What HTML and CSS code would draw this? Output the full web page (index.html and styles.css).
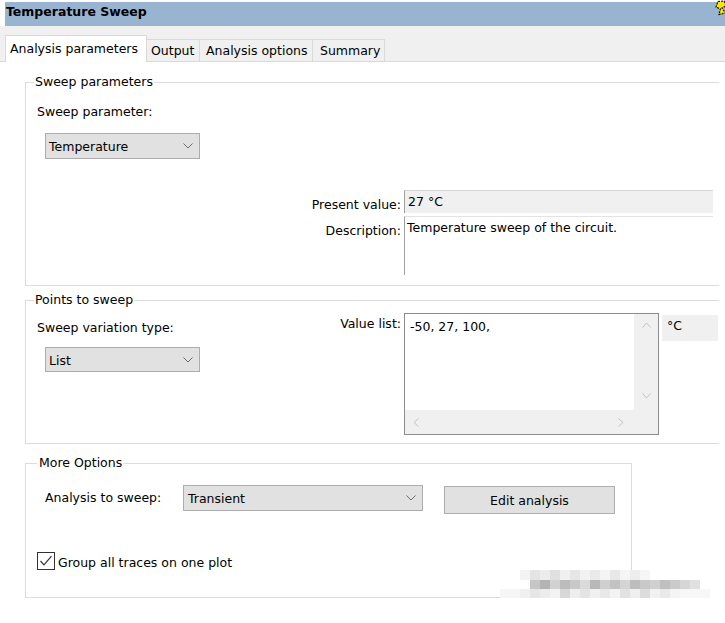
FILE: index.html
```html
<!DOCTYPE html>
<html>
<head>
<meta charset="utf-8">
<title>Temperature Sweep</title>
<link rel="stylesheet" href="styles.css">
</head>
<body>
<div class="titlebar">
  <span class="title">Temperature Sweep</span>
  <svg class="corner-icon" width="14" height="16" viewBox="0 0 14 16">
    <path d="M5 1.5 L11 1 L13 6 L9 8 L12.5 13 L6 14.5 L7.5 9 L3 7 Z" fill="#ffe600" stroke="#111" stroke-width="1.2" stroke-dasharray="2 1"/>
  </svg>
</div>
<div class="tabstrip">
  <div class="tab active">Analysis parameters</div>
  <div class="tab t-output">Output</div>
  <div class="tab t-options">Analysis options</div>
  <div class="tab t-summary">Summary</div>
</div>
<div class="page">
  <fieldset class="group g1">
    <legend>Sweep parameters</legend>
    <div class="field-label">Sweep parameter:</div>
    <div class="combo combo-small">
      <span>Temperature</span>
      <svg class="chev" width="10" height="6" viewBox="0 0 10 6"><path d="M0.5 0.5 L5 5 L9.5 0.5" fill="none" stroke="#6d6d6d" stroke-width="1"/></svg>
    </div>
    <div class="props">
      <div class="prop-label">Present value:</div>
      <div class="readonly">27 °C</div>
      <div class="prop-label">Description:</div>
      <div class="desc">Temperature sweep of the circuit.</div>
    </div>
  </fieldset>

  <fieldset class="group g2">
    <legend>Points to sweep</legend>
    <div class="g2-row">
      <div class="left-col">
        <div class="field-label">Sweep variation type:</div>
        <div class="combo combo-small combo-list">
          <span>List</span>
          <svg class="chev" width="10" height="6" viewBox="0 0 10 6"><path d="M0.5 0.5 L5 5 L9.5 0.5" fill="none" stroke="#6d6d6d" stroke-width="1"/></svg>
        </div>
      </div>
      <div class="values">
        <div class="value-label">Value list:</div>
        <div class="listbox">
          <div class="list-content">-50, 27, 100,</div>
          <div class="vscroll">
            <svg width="9" height="6" viewBox="0 0 9 6"><path d="M0.5 5.5 L4.5 1 L8.5 5.5" fill="none" stroke="#c2c2c2" stroke-width="1"/></svg>
            <svg width="9" height="6" viewBox="0 0 9 6"><path d="M0.5 0.5 L4.5 5 L8.5 0.5" fill="none" stroke="#c2c2c2" stroke-width="1"/></svg>
          </div>
          <div class="hscroll">
            <svg width="6" height="9" viewBox="0 0 6 9"><path d="M5.5 0.5 L1 4.5 L5.5 8.5" fill="none" stroke="#c2c2c2" stroke-width="1"/></svg>
            <svg width="6" height="9" viewBox="0 0 6 9"><path d="M0.5 0.5 L5 4.5 L0.5 8.5" fill="none" stroke="#c2c2c2" stroke-width="1"/></svg>
          </div>
          <div class="corner"></div>
        </div>
        <div class="unit">°C</div>
      </div>
    </div>
  </fieldset>

  <fieldset class="group g3">
    <legend>More Options</legend>
    <div class="analysis-row">
      <div class="analysis-label">Analysis to sweep:</div>
      <div class="combo combo-wide">
        <span>Transient</span>
        <svg class="chev" width="10" height="6" viewBox="0 0 10 6"><path d="M0.5 0.5 L5 5 L9.5 0.5" fill="none" stroke="#6d6d6d" stroke-width="1"/></svg>
      </div>
      <div class="button">Edit analysis</div>
    </div>
    <div class="check-row">
      <svg class="checkbox" width="18" height="18" viewBox="0 0 18 18">
        <rect x="0.5" y="0.5" width="17" height="17" fill="#fff" stroke="#333"/>
        <path d="M3.5 9 L7 12.8 L14.5 4.2" fill="none" stroke="#333" stroke-width="1.2"/>
      </svg>
      <span class="check-label">Group all traces on one plot</span>
    </div>
  </fieldset>
</div>

<svg class="watermark" width="210" height="28" viewBox="0 0 210 28">
  <g>
    <rect x="20" y="0" width="10" height="10" fill="#f3f3f3"/>
    <rect x="30" y="0" width="10" height="10" fill="#e4e4e4"/>
    <rect x="40" y="0" width="10" height="10" fill="#ececec"/>
    <rect x="50" y="0" width="10" height="10" fill="#e0e0e0"/>
    <rect x="60" y="0" width="10" height="10" fill="#f0f0f0"/>
    <rect x="70" y="0" width="10" height="10" fill="#e6e6e6"/>
    <rect x="80" y="0" width="10" height="10" fill="#f2f2f2"/>
    <rect x="90" y="0" width="10" height="10" fill="#eaeaea"/>
    <rect x="100" y="0" width="10" height="10" fill="#f4f4f4"/>
    <rect x="110" y="0" width="10" height="10" fill="#e8e8e8"/>
    <rect x="120" y="0" width="10" height="10" fill="#f5f5f5"/>
    <rect x="130" y="0" width="10" height="10" fill="#ededed"/>
    <rect x="140" y="0" width="10" height="10" fill="#f6f6f6"/>
  </g>
  <g>
    <rect x="30" y="10" width="10" height="9" fill="#c6c6c6"/>
    <rect x="40" y="10" width="10" height="9" fill="#b4b4b4"/>
    <rect x="50" y="10" width="10" height="9" fill="#d2d2d2"/>
    <rect x="60" y="10" width="10" height="9" fill="#bcbcbc"/>
    <rect x="70" y="10" width="10" height="9" fill="#c8c8c8"/>
    <rect x="80" y="10" width="10" height="9" fill="#dadada"/>
    <rect x="90" y="10" width="10" height="9" fill="#b8b8b8"/>
    <rect x="100" y="10" width="10" height="9" fill="#cfcfcf"/>
    <rect x="110" y="10" width="10" height="9" fill="#c2c2c2"/>
    <rect x="120" y="10" width="10" height="9" fill="#d4d4d4"/>
    <rect x="130" y="10" width="10" height="9" fill="#bdbdbd"/>
    <rect x="140" y="10" width="10" height="9" fill="#c9c9c9"/>
    <rect x="150" y="10" width="10" height="9" fill="#d0d0d0"/>
    <rect x="160" y="10" width="10" height="9" fill="#c0c0c0"/>
    <rect x="170" y="10" width="10" height="9" fill="#cacaca"/>
    <rect x="180" y="10" width="10" height="9" fill="#d6d6d6"/>
    <rect x="190" y="10" width="10" height="9" fill="#e0e0e0"/>
  </g>
  <g>
    <rect x="0" y="19" width="20" height="9" fill="#f6f6f6"/>
    <rect x="20" y="19" width="10" height="9" fill="#f0f0f0"/>
    <rect x="30" y="19" width="10" height="9" fill="#e6e6e6"/>
    <rect x="40" y="19" width="10" height="9" fill="#ececec"/>
    <rect x="50" y="19" width="10" height="9" fill="#f2f2f2"/>
    <rect x="60" y="19" width="10" height="9" fill="#d8d8d8"/>
    <rect x="70" y="19" width="10" height="9" fill="#eeeeee"/>
    <rect x="80" y="19" width="10" height="9" fill="#e4e4e4"/>
    <rect x="90" y="19" width="10" height="9" fill="#f0f0f0"/>
    <rect x="100" y="19" width="10" height="9" fill="#e8e8e8"/>
    <rect x="110" y="19" width="10" height="9" fill="#f3f3f3"/>
    <rect x="120" y="19" width="10" height="9" fill="#e2e2e2"/>
    <rect x="130" y="19" width="10" height="9" fill="#efefef"/>
    <rect x="140" y="19" width="10" height="9" fill="#dcdcdc"/>
    <rect x="150" y="19" width="10" height="9" fill="#f1f1f1"/>
    <rect x="160" y="19" width="10" height="9" fill="#e9e9e9"/>
    <rect x="170" y="19" width="10" height="9" fill="#f4f4f4"/>
    <rect x="180" y="19" width="30" height="9" fill="#f7f7f7"/>
  </g>
</svg>
</body>
</html>
```

FILE: styles.css
```css
* { box-sizing: border-box; }

html, body {
  margin: 0;
  padding: 0;
  background: #ffffff;
}

body {
  position: relative;
  width: 725px;
  height: 623px;
  overflow: hidden;
  font-family: "DejaVu Sans", "Noto Sans", sans-serif;
  font-size: 12.5px;
  line-height: 16px;
  color: #000000;
}

/* Title bar */
.titlebar {
  position: relative;
  margin: 2px 0 0 5px;
  height: 24px;
  padding-left: 1px;
  background: #99b4d1;
  font-weight: bold;
  line-height: 20px;
}

.corner-icon {
  position: absolute;
  right: -2px;
  top: -2px;
}

/* Tabs */
.tabstrip {
  display: flex;
  align-items: flex-end;
  height: 36px;
  padding-left: 5px;
  background: #f0f0f0;
  border-bottom: 1px solid #d9d9d9;
}

.tab {
  height: 22px;
  border: 1px solid #d9d9d9;
  border-bottom: none;
  margin-left: -1px;
  line-height: 22px;
  white-space: nowrap;
  background: #f0f0f0;
}

.tab.active {
  width: 142px;
  height: 27px;
  margin-left: 0;
  margin-bottom: -1px;
  padding-left: 4px;
  line-height: 26px;
  background: #ffffff;
}

.t-output { width: 54px; padding-left: 4px; }
.t-options { width: 114px; padding-left: 6px; }
.t-summary { width: 73px; padding-left: 7px; }

/* Page */
.page {
  padding: 12px 0 0 25px;
}

.group {
  margin: 0;
  min-width: 0;
  border: 1px solid #dcdcdc;
}

.group legend {
  padding: 0 1px;
  margin-left: -1px;
  line-height: 16px;
}

.g1 {
  width: 694px;
  border-right: none;
  padding: 13px 6px 10px 9px;
}

.field-label {
  margin-left: 2px;
  padding-top: 1px;
}

.combo {
  display: flex;
  align-items: center;
  justify-content: space-between;
  height: 26px;
  background: #e1e1e1;
  border: 1px solid #adadad;
  padding: 2px 6px 0 3px;
  white-space: nowrap;
}

.combo-small {
  width: 155px;
  margin: 13px 0 0 10px;
}

.combo-list {
  height: 25px;
  margin-top: 11px;
}

.chev { flex: none; margin-top: -2px; }

.props {
  display: grid;
  grid-template-columns: max-content 309px;
  column-gap: 3px;
  row-gap: 3px;
  justify-content: end;
  margin-top: 31px;
}

.prop-label {
  text-align: right;
  padding-top: 6.5px;
}

.readonly {
  height: 23px;
  background: #f0f0f0;
  border-left: 1px solid #a0a0a0;
  border-top: 1px solid #d4d4d4;
  padding: 3px 0 0 3px;
}

.desc {
  height: 59px;
  background: #ffffff;
  border-left: 1px solid #a0a0a0;
  border-top: 1px solid #e3e3e3;
  padding: 3px 0 0 2px;
}

/* Points to sweep */
.g2 {
  width: 694px;
  margin-top: 6px;
  border-right: none;
  padding: 5px 1px 8px 9px;
}

.g2-row {
  display: flex;
  align-items: flex-start;
}

.left-col .field-label {
  margin-top: 6px;
}

.values {
  display: flex;
  align-items: flex-start;
  gap: 3px;
  margin-left: auto;
}

.value-label {
  padding-top: 3px;
}

.listbox {
  display: grid;
  grid-template-columns: 1fr 24px;
  grid-template-rows: 1fr 24px;
  width: 255px;
  height: 122px;
  border: 1px solid #8c8c8c;
  background: #f0f0f0;
}

.list-content {
  background: #ffffff;
  padding: 5px 0 0 5px;
  border-bottom-right-radius: 3px;
}

.vscroll {
  display: flex;
  flex-direction: column;
  justify-content: space-between;
  align-items: center;
  padding: 8px 0 11px;
}

.hscroll {
  display: flex;
  justify-content: space-between;
  align-items: center;
  padding: 0 10px 0 8px;
}

.unit {
  width: 56px;
  height: 26px;
  margin-top: 2px;
  background: #f0f0f0;
  padding: 3px 0 0 5px;
}

/* More options */
.g3 {
  width: 607px;
  margin-top: 11px;
  padding: 14px 11px 27px 11px;
}

.g3 legend {
  margin-left: 0;
  padding: 0 2px;
}

.analysis-row {
  display: flex;
  align-items: flex-start;
}

.analysis-label {
  width: 138px;
  margin-left: 8px;
  padding-top: 5px;
}

.combo-wide {
  width: 240px;
  padding-left: 4px;
}

.button {
  width: 171px;
  height: 28px;
  margin: 1px 0 0 21px;
  padding-top: 3px;
  background: #e1e1e1;
  border: 1px solid #adadad;
  text-align: center;
  line-height: 22px;
}

.check-row {
  display: flex;
  align-items: flex-start;
  gap: 3px;
  margin-top: 38px;
}

.check-label {
  padding-top: 3px;
  line-height: 15px;
}

.checkbox { flex: none; }

/* blurred watermark */
.watermark {
  position: absolute;
  left: 500px;
  top: 570px;
}
```
